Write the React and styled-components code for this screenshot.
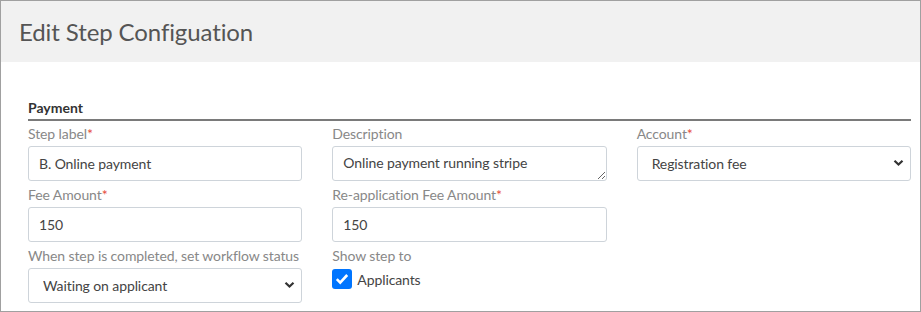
import React from "react";
import styled, { createGlobalStyle } from "styled-components";

const Global = createGlobalStyle`
  html, body { margin: 0; padding: 0; background: #fff; }
  body { font-family: Lato, "Open Sans", sans-serif; }
  * { box-sizing: border-box; }
`;

const Frame = styled.div`
  width: 921px;
  height: 312px;
  border: 1px solid #a0a0a0;
  overflow: hidden;
  background: #fff;
`;

const Header = styled.div`
  height: 61px;
  background: #f1f1f1;
  display: flex;
  align-items: center;
  padding-left: 18px;
`;

const Title = styled.h1`
  margin: 0;
  font-family: Lato, sans-serif;
  font-weight: 400;
  font-size: 24px;
  color: #555;
  line-height: 30px;
  padding-top: 0;
  letter-spacing: -0.1px;
`;

const Body = styled.div`
  padding: 37px 9px 0 27px;
`;

const SectionTitle = styled.div`
  font-family: Lato, sans-serif;
  font-weight: 700;
  font-size: 14px;
  color: #333;
  line-height: 18px;
  padding-bottom: 2px;
  border-bottom: 2px solid #7a7a7a;
`;

const Grid = styled.div`
  display: grid;
  grid-template-columns: repeat(3, 1fr);
  column-gap: 30px;
  padding-top: 3px;
`;

const Column = styled.div`
  display: flex;
  flex-direction: column;
  min-width: 0;
`;

const Field = styled.div`
  display: flex;
  flex-direction: column;
  margin-bottom: 4px;
`;

const Label = styled.label`
  font-family: Lato, sans-serif;
  font-size: 14px;
  line-height: 20px;
  color: #888;
  margin-bottom: 2px;
  white-space: nowrap;
  letter-spacing: -0.1px;
`;

const Req = styled.span`
  color: #e74c3c;
`;

const controlBase = `
  width: 100%;
  height: 35px;
  border: 1px solid #ced4da;
  border-radius: 3px;
  background: #fff;
  font-family: Lato, sans-serif;
  font-size: 14px;
  color: #444;
  outline: none;
  margin: 0;
  letter-spacing: -0.1px;
`;

const Input = styled.input`
  ${controlBase}
  padding: 0 10px;
`;

const TextArea = styled.textarea`
  ${controlBase}
  padding: 6px 10px;
  line-height: 20px;
  resize: vertical;
  display: block;
`;

const SelectWrap = styled.div`
  position: relative;
  height: 35px;
`;

const Select = styled.select`
  ${controlBase}
  appearance: none;
  -webkit-appearance: none;
  padding: 0 30px 0 14px;
`;

const Chevron = styled.svg`
  position: absolute;
  right: 7px;
  top: 13px;
  pointer-events: none;
`;

const CheckRow = styled.label`
  display: flex;
  align-items: center;
  gap: 5px;
  font-family: Lato, sans-serif;
  font-size: 14px;
  color: #444;
  margin-top: 1px;
  letter-spacing: -0.1px;
`;

const Box = styled.span`
  width: 20px;
  height: 20px;
  border-radius: 3px;
  background: #0075ff;
  display: inline-flex;
  align-items: center;
  justify-content: center;
`;

function SelectField({ value, options }) {
  return (
    <SelectWrap>
      <Select defaultValue={value}>
        {options.map((o) => (
          <option key={o}>{o}</option>
        ))}
      </Select>
      <Chevron width="11" height="8" viewBox="0 0 11 8">
        <path d="M1.5 1.8 L5.5 5.6 L9.5 1.8" fill="none" stroke="#333" strokeWidth="2.2" />
      </Chevron>
    </SelectWrap>
  );
}

export default function App() {
  return (
    <>
      <Global />
      <Frame>
        <Header>
          <Title>Edit Step Configuation</Title>
        </Header>
        <Body>
          <SectionTitle>Payment</SectionTitle>
          <Grid>
            <Column>
              <Field>
                <Label>Step label<Req>*</Req></Label>
                <Input defaultValue="B. Online payment" />
              </Field>
              <Field>
                <Label>Fee Amount<Req>*</Req></Label>
                <Input defaultValue="150" />
              </Field>
              <Field>
                <Label>When step is completed, set workflow status</Label>
                <SelectField value="Waiting on applicant" options={["Waiting on applicant", "Complete"]} />
              </Field>
            </Column>
            <Column>
              <Field>
                <Label>Description</Label>
                <TextArea defaultValue="Online payment running stripe" />
              </Field>
              <Field>
                <Label>Re-application Fee Amount<Req>*</Req></Label>
                <Input defaultValue="150" />
              </Field>
              <Field>
                <Label>Show step to</Label>
                <CheckRow>
                  <Box>
                    <svg width="14" height="12" viewBox="0 0 14 12">
                      <path d="M1.8 6.2 L5.2 9.6 L12.2 2" fill="none" stroke="#fff" strokeWidth="2.6" />
                    </svg>
                  </Box>
                  Applicants
                </CheckRow>
              </Field>
            </Column>
            <Column>
              <Field>
                <Label>Account<Req>*</Req></Label>
                <SelectField value="Registration fee" options={["Registration fee", "Other"]} />
              </Field>
            </Column>
          </Grid>
        </Body>
      </Frame>
    </>
  );
}
